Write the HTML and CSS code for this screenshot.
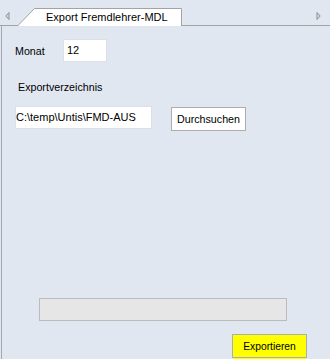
FILE: index.html
```html
<!DOCTYPE html>
<html lang="de">
<head>
<meta charset="utf-8">
<title>Export Fremdlehrer-MDL</title>
<link rel="stylesheet" href="styles.css">
</head>
<body>
<div class="app">
  <div class="tabstrip">
    <div class="arrow arrow-left">
      <svg width="5" height="8" viewBox="0 0 5 8"><path d="M4 0.5 V7.5 L0.8 4 Z" fill="#d6dbe3" stroke="#8a8f96" stroke-width="1"/></svg>
    </div>
    <div class="tab">
      <svg class="tab-shape" width="166" height="18" viewBox="0 0 166 18"><path d="M0.5 18 L17.5 0.5 H164.5 V18" fill="#ffffff" stroke="#a3a3a3" stroke-width="1"/></svg>
      <span class="tab-title">Export Fremdlehrer-MDL</span>
    </div>
    <div class="tab-fill"></div>
    <div class="arrow arrow-right">
      <svg width="5" height="8" viewBox="0 0 5 8"><path d="M1 0.5 V7.5 L4.2 4 Z" fill="#d6dbe3" stroke="#8a8f96" stroke-width="1"/></svg>
    </div>
  </div>
  <div class="panel">
    <div class="row-monat">
      <label class="label-monat">Monat</label>
      <div class="textbox textbox-monat">12</div>
    </div>
    <div class="label-dir">Exportverzeichnis</div>
    <div class="row-dir">
      <div class="textbox textbox-dir">C:\temp\Untis\FMD-AUS</div>
      <button class="btn btn-browse">Durchsuchen</button>
    </div>
    <div class="spacer"></div>
    <div class="progress"></div>
    <div class="row-export">
      <button class="btn btn-export">Exportieren</button>
    </div>
  </div>
</div>
</body>
</html>
```
FILE: styles.css
```css
html, body {
  margin: 0;
  padding: 0;
}
body {
  width: 330px;
  height: 359px;
  overflow: hidden;
  background: #e1e7f0;
  font-family: "Liberation Sans", Arial, sans-serif;
  font-size: 11px;
  color: #000;
}
.app {
  display: flex;
  flex-direction: column;
  height: 359px;
}
.tabstrip {
  display: flex;
  align-items: flex-end;
  height: 26px;
  box-sizing: border-box;
  border-bottom: 1px solid #a3a3a3;
  flex: none;
}
.arrow {
  align-self: flex-start;
  margin-top: 12px;
  height: 8px;
  display: flex;
}
.arrow-left {
  width: 17px;
  padding-left: 5px;
  box-sizing: border-box;
}
.arrow-right {
  width: 15px;
  padding-left: 1px;
  box-sizing: border-box;
}
.tab {
  position: relative;
  width: 166px;
  height: 18px;
  margin-bottom: -1px;
  flex: none;
}
.tab-shape {
  position: absolute;
  left: 0;
  top: 0;
}
.tab-title {
  position: relative;
  display: block;
  padding-left: 29px;
  line-height: 18px;
  font-size: 11px;
  white-space: nowrap;
}
.tab-fill {
  flex: 1;
}
.panel {
  flex: 1;
  display: flex;
  flex-direction: column;
  margin-left: 1px;
  border-left: 1px solid #a3a8b0;
}
.row-monat {
  display: flex;
  align-items: center;
  margin-top: 13px;
  padding-left: 13px;
}
.label-monat {
  width: 48px;
  font-size: 10.7px;
}
.textbox {
  background: #fff;
  border: 1px solid #dcdfe4;
  box-sizing: border-box;
  height: 23px;
  line-height: 21px;
  font-size: 11px;
  white-space: nowrap;
}
.textbox-monat {
  width: 44px;
  padding-left: 3px;
}
.label-dir {
  margin-top: 19px;
  padding-left: 16px;
  line-height: 13px;
  font-size: 10.7px;
}
.row-dir {
  display: flex;
  align-items: flex-start;
  margin-top: 12px;
  padding-left: 13px;
  gap: 19px;
}
.textbox-dir {
  width: 137px;
  padding-left: 0;
}
.btn {
  font-family: "Liberation Sans", Arial, sans-serif;
  font-size: 10.7px;
  color: #000;
  box-sizing: border-box;
  padding: 0;
  margin: 0;
  height: 24px;
  width: 75px;
  border: 1px solid #adadad;
  border-radius: 0;
  background: #fff;
}
.btn-browse {
  margin-top: 1px;
}
.spacer {
  flex: 1;
}
.progress {
  margin-left: 37px;
  width: 248px;
  height: 23px;
  box-sizing: border-box;
  background: #e6e6e6;
  border: 1px solid #bcbcbc;
}
.row-export {
  display: flex;
  padding-left: 230px;
  margin-top: 13px;
  height: 25px;
}
.btn-export {
  background: #ffff00;
  font-size: 10.3px;
  box-shadow: 0 3px 0 -1px #ffff00;
}
```
